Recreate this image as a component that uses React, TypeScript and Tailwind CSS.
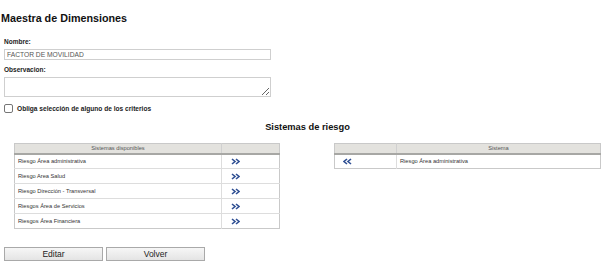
import React from 'react';

const disponibles = [
  'Riesgo Área administrativa',
  'Riesgo Area Salud',
  'Riesgo Dirección - Transversal',
  'Riesgos Área de Servicios',
  'Riesgos Área Financiera',
];

const asignados = ['Riesgo Área administrativa'];

function Chevrons({ dir }: { dir: 'right' | 'left' }) {
  const d =
    dir === 'right'
      ? 'M1 1 L4 3.5 L1 6 M5 1 L8 3.5 L5 6'
      : 'M4 1 L1 3.5 L4 6 M8 1 L5 3.5 L8 6';
  return (
    <svg width="9" height="7" viewBox="0 0 9 7" className="block">
      <path d={d} fill="none" stroke="#2f4f93" strokeWidth="1.6" />
    </svg>
  );
}

export default function App() {
  return (
    <div className="w-[608px] h-[266px] bg-white overflow-hidden font-['Liberation_Sans',Arial,sans-serif] text-[#222]">
      <h1 className="mt-[13px] ml-[1px] text-[10.75px] leading-[11px] font-bold text-[#111]">
        Maestra de Dimensiones
      </h1>

      <div className="pl-[4px]">
        <label className="block mt-[14px] text-[6.5px] leading-[8px] font-bold text-[#222]">Nombre:</label>
        <input
          readOnly
          value="FACTOR DE MOVILIDAD"
          className="block mt-[3px] w-[267px] h-[11px] px-[2px] border border-[#cfcfcf] text-[6.7px] leading-[9px] text-[#555] outline-none"
        />

        <label className="block mt-[6px] text-[6.5px] leading-[8px] font-bold text-[#222]">Observacion:</label>
        <textarea className="block mt-[3px] w-[267px] h-[20px] border border-[#cfcfcf] text-[6.7px] outline-none" />

        <div className="mt-[7px] flex items-center gap-[4px] h-[9px]">
          <span className="block w-[9px] h-[9px] border border-[#767676] rounded-[2px] bg-white" />
          <span className="text-[6.6px] leading-[8px] font-bold text-[#222]">
            Obliga selección de alguno de los criterios
          </span>
        </div>
      </div>

      <h2 className="mt-[9px] pl-[7px] text-center text-[9.3px] leading-[10px] font-bold text-[#111]">
        Sistemas de riesgo
      </h2>

      <div className="mt-[11px] flex items-start pl-[14px] gap-[54px]">
        <table className="w-[266px] border-collapse border border-[#c9c9c9] text-[5.7px]">
          <thead>
            <tr className="bg-[#e3e2de] border-b-2 border-[#a7a7a4]">
              <th className="h-[10px] p-0 font-normal text-[#555] border-r border-[#d0d0d0]">Sistemas disponibles</th>
              <th className="w-[58px] p-0" />
            </tr>
          </thead>
          <tbody>
            {disponibles.map((s) => (
              <tr key={s} className="h-[15px] border-b border-[#dddddd] last:border-b-0">
                <td className="p-0 pl-[3px] text-[#333] border-r border-[#dddddd]">{s}</td>
                <td className="p-0 pl-[9px]">
                  <Chevrons dir="right" />
                </td>
              </tr>
            ))}
          </tbody>
        </table>

        <table className="w-[267px] border-collapse border border-[#c9c9c9] text-[5.7px]">
          <thead>
            <tr className="bg-[#e3e2de] border-b-2 border-[#a7a7a4]">
              <th className="w-[62px] h-[10px] p-0 border-r border-[#d0d0d0]" />
              <th className="p-0 font-normal text-[#555]">Sistema</th>
            </tr>
          </thead>
          <tbody>
            {asignados.map((s) => (
              <tr key={s} className="h-[15px]">
                <td className="p-0 pl-[8px] border-r border-[#dddddd]">
                  <Chevrons dir="left" />
                </td>
                <td className="p-0 pl-[3px] text-[#333]">{s}</td>
              </tr>
            ))}
          </tbody>
        </table>
      </div>

      <div className="mt-[18px] pl-[4px] flex gap-[3px]">
        <button className="w-[99px] h-[14px] border border-[#a9a9a9] bg-gradient-to-b from-[#f6f6f6] to-[#e4e4e4] text-[8.5px] leading-[12px] text-[#222]">
          Editar
        </button>
        <button className="w-[99px] h-[14px] border border-[#a9a9a9] bg-gradient-to-b from-[#f6f6f6] to-[#e4e4e4] text-[8.5px] leading-[12px] text-[#222]">
          Volver
        </button>
      </div>
    </div>
  );
}
